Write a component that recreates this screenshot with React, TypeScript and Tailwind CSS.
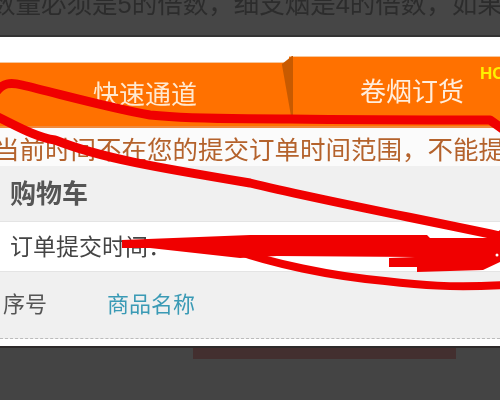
export default function App() {
  const font = { fontFamily: '"Liberation Sans","Noto Sans CJK SC",sans-serif' };
  return (
    <div className="relative w-[500px] h-[400px] overflow-hidden bg-white" style={font}>
      <div className="h-[37px] bg-[#464646] border-b-2 border-[#333333] overflow-hidden whitespace-nowrap text-[#2c2c2c] text-[25.5px] leading-[26px]">
        <div className="-mt-[9px] -ml-[10px] w-[600px] blur-[0.5px]">数量必须是5的倍数，细支烟是4的倍数，如果</div>
      </div>
      <div className="h-[26px] bg-white"></div>
      <div className="flex items-end h-[65px] border-b-2 border-[#f08a3c]">
        <div className="flex-none w-[289px] h-[64px] bg-[#ff7100] border-t border-[#f6c79c] flex items-center pl-[93px] text-[#ffe9d0] text-[26px] leading-[30px]">
          <span className="mt-[1px] blur-[0.4px]">快速通道</span>
        </div>
        <div className="relative flex-1 h-[70px] bg-[#ff7100] border-t border-[#f6c79c] flex items-center pl-[71px] text-[#ffeedd] text-[26px] leading-[30px]">
          <svg className="absolute -left-[7px] -top-[1px]" width="11" height="66" viewBox="0 0 11 66">
            <path d="M10 0 L0 8 L0 9 L9 60 L11 60 L11 0 Z" fill="#c85a00" />
          </svg>
          <span className="blur-[0.4px]">卷烟订货</span>
          <span className="absolute left-[191px] top-[8px] text-[#fff000] text-[17px] font-bold leading-[18px] blur-[0.3px]">HOT</span>
        </div>
      </div>
      <div className="h-[38px] bg-[#fbfbfb] flex items-center whitespace-nowrap overflow-hidden text-[#b4622c] text-[25.5px] leading-[28px]">
        <span className="-ml-[6px] mt-[5px] blur-[0.4px]">当前时间不在您的提交订单时间范围，不能提</span>
      </div>
      <div className="h-[55px] bg-[#f0f0f0] flex items-center pl-[10px] text-[#555555] text-[26px] leading-[30px] font-bold">
        <span className="blur-[0.5px]">购物车</span>
      </div>
      <div className="h-[51px] bg-white border-y border-[#e4e4e4] flex items-center pl-[10px] text-[#444444] text-[23px] leading-[28px]">
        <span className="blur-[0.4px]">订单提交时间：</span>
      </div>
      <div className="h-[67px] bg-[#f0f0f0] border-b border-dashed border-[#bbbbbb] flex items-center text-[22px] leading-[28px]">
        <span className="text-[#555555] pl-[3px] w-[107px] blur-[0.4px]">序号</span>
        <span className="text-[#3a9ab5] blur-[0.4px]">商品名称</span>
      </div>
      <div className="h-[7px] bg-white"></div>
      <div className="relative h-[60px] bg-[#444444] border-t-2 border-[#2e2a2a]">
        <div className="absolute left-[193px] top-0 w-[263px] h-[11px] bg-[#432f2f]"></div>
      </div>
      <svg className="absolute inset-0" width="500" height="400" viewBox="0 0 500 400" fill="none">
        <path d="M-4 92 C3 83 10 82 22 85 C60 94 110 108 150 115 C200 120 240 118 290 119 C360 120 430 120 490 120 L504 130" stroke="#f00000" strokeWidth="9" strokeLinejoin="round" />
        <path d="M-4 116 C15 125 35 137 55 140 C100 158 160 168 250 183 C320 200 400 215 500 236" stroke="#f00000" strokeWidth="9" />
        <path d="M235 250 C270 263 330 276 385 281 C420 285 450 288 504 285" stroke="#f00000" strokeWidth="8" />
        <path d="M122 240 L250 235 L427 235 L430 238 L490 238 L500 230 L500 262 L483 270 L417 272 L417 267 L389 267 L389 258 L415 257 L277 256 L240 258 L150 248 L122 248 Z" fill="#f00000" />
        <circle cx="497" cy="255" r="1.5" fill="#ffffff" />
      </svg>
    </div>
  );
}
